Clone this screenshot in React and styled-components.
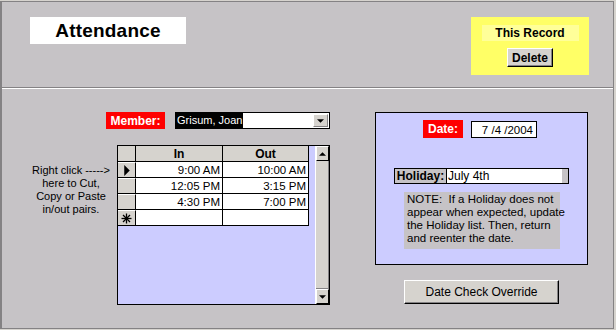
import styled, { createGlobalStyle } from "styled-components";

const Global = createGlobalStyle`
  html, body {
    margin: 0;
    padding: 0;
    background: #d6d3ce;
  }
  body {
    font-family: "Liberation Sans", Arial, sans-serif;
    font-size: 11px;
    color: #000;
  }
`;

const Window = styled.div`
  margin-top: 1px;
  width: 611px;
  height: 326px;
  background: #c6c3c6;
  border-top: 1px solid #848284;
  border-left: 2px solid #848284;
  border-right: 1px solid #848284;
  border-bottom: 1px solid #848284;
  display: flex;
  flex-direction: column;
`;

const Header = styled.div`
  height: 86px;
  display: flex;
  justify-content: space-between;
  align-items: flex-start;
  padding: 15px 24px 0 28px;
  box-sizing: border-box;
  border-bottom: 1px solid #848284;
`;

const Divider = styled.div`
  height: 1px;
  background: #ffffff;
`;

const TitleBox = styled.div`
  width: 156px;
  height: 27px;
  background: #fff;
  display: flex;
  align-items: center;
  justify-content: center;
  font-size: 19px;
  font-weight: bold;
  letter-spacing: 0.2px;
`;

const RecordBox = styled.div`
  width: 118px;
  height: 58px;
  background: #ffff66;
  display: flex;
  flex-direction: column;
  align-items: center;
  padding-top: 8px;
  box-sizing: border-box;
  gap: 7px;
`;

const RecordTitle = styled.div`
  width: 97px;
  height: 16px;
  background: #ffff99;
  display: flex;
  align-items: center;
  justify-content: center;
  font-weight: bold;
  font-size: 12px;
`;

const Button = styled.button`
  width: ${(p) => p.$w}px;
  height: ${(p) => p.$h}px;
  background: #d6d3ce;
  font-family: "Liberation Sans", Arial, sans-serif;
  font-size: 12px;
  font-weight: ${(p) => (p.$bold ? "bold" : "normal")};
  color: #000;
  padding: 0;
  border: 1px solid;
  border-color: #fff #000 #000 #fff;
  box-shadow: inset -1px -1px 0 #848284;
  cursor: default;
`;

const Body = styled.div`
  flex: 1;
  display: flex;
  padding-top: 23px;
`;

const LeftCol = styled.div`
  width: 328px;
  display: flex;
  flex-direction: column;
`;

const MemberRow = styled.div`
  display: flex;
  gap: 10px;
  margin-left: 104px;
`;

const RedLabel = styled.div`
  width: ${(p) => p.$w}px;
  height: ${(p) => p.$h}px;
  background: #ff0000;
  color: #fff;
  font-weight: bold;
  font-size: 12px;
  display: flex;
  align-items: center;
  justify-content: center;
`;

const Combo = styled.div`
  width: 155px;
  height: 17px;
  box-sizing: border-box;
  background: #fff;
  border: 1px solid #000;
  display: flex;
  align-items: center;
  justify-content: space-between;
`;

const ComboText = styled.span`
  background: #000;
  color: #fff;
  font-size: 11px;
  line-height: 15px;
  padding: 0 1px;
`;

const DropButton = styled.div`
  width: 15px;
  height: 13px;
  margin-right: 1px;
  background: #d6d3ce;
  border: 1px solid;
  border-color: #fff #848284 #848284 #fff;
  box-sizing: border-box;
  display: flex;
  align-items: center;
  justify-content: center;
`;

const GridRow = styled.div`
  display: flex;
  margin-top: 16px;
`;

const HelpText = styled.div`
  width: 84px;
  margin-left: 27px;
  margin-right: 4px;
  padding-top: 19px;
  text-align: center;
  font-size: 11px;
  line-height: 13px;
`;

const Grid = styled.div`
  width: 213px;
  height: 160px;
  box-sizing: border-box;
  border: 1px solid #000;
  background: #ccccff;
  display: flex;
`;

const Sheet = styled.div`
  flex: 1;
  display: flex;
  flex-direction: column;
`;

const Row = styled.div`
  display: grid;
  grid-template-columns: 18px 87px 86px;
  height: 16px;
  border-bottom: 1px solid #000;
  box-sizing: border-box;
`;

const HeadCell = styled.div`
  background: #d6d3ce;
  border-right: 1px solid #000;
  font-weight: bold;
  font-size: 12px;
  display: flex;
  align-items: center;
  justify-content: center;
`;

const Selector = styled.div`
  background: #d6d3ce;
  border-right: 1px solid #000;
  border-top: 1px solid #fff;
  display: flex;
  align-items: center;
  justify-content: center;
`;

const Cell = styled.div`
  background: #fff;
  border-right: 1px solid #000;
  font-size: 11.5px;
  display: flex;
  align-items: center;
  justify-content: flex-end;
  padding-right: 2px;
`;

const Scroll = styled.div`
  width: 15px;
  margin-left: 6px;
  display: flex;
  flex-direction: column;
  background: #d6d3ce;
  border-left: 1px solid #fff;
`;

const Track = styled.div`
  flex: 1;
  border-bottom: 1px solid #848284;
  box-shadow: inset -1px 0 0 #848284;
`;

const ArrowBtn = styled.div`
  height: 15px;
  box-sizing: border-box;
  background: #d6d3ce;
  border: 1px solid;
  border-color: #fff #000 #000 #fff;
  display: flex;
  align-items: center;
  justify-content: center;
`;

const RightCol = styled.div`
  margin-left: 45px;
  display: flex;
  flex-direction: column;
`;

const DatePanel = styled.div`
  width: 213px;
  height: 153px;
  box-sizing: border-box;
  border: 1px solid #000;
  background: #ccccff;
  display: flex;
  flex-direction: column;
`;

const DateRow = styled.div`
  display: flex;
  align-items: flex-start;
  gap: 8px;
  margin: 7px 0 0 47px;
`;

const DateInput = styled.div`
  width: 66px;
  height: 17px;
  margin-top: 1px;
  box-sizing: border-box;
  background: #fff;
  border: 1px solid #000;
  font-size: 11.5px;
  display: flex;
  align-items: center;
  justify-content: flex-end;
  padding-right: 3px;
`;

const HolidayRow = styled.div`
  width: 175px;
  height: 16px;
  box-sizing: border-box;
  margin: 30px 0 0 18px;
  border: 1px solid #000;
  display: flex;
  background: #fff;
`;

const HolidayLabel = styled.div`
  width: 51px;
  background: #c6c3c6;
  border-right: 1px solid #000;
  font-weight: bold;
  font-size: 12px;
  display: flex;
  align-items: center;
  justify-content: center;
`;

const HolidayValue = styled.div`
  flex: 1;
  font-size: 12px;
  padding-left: 1px;
  display: flex;
  align-items: center;
`;

const HolidayEdge = styled.div`
  width: 6px;
  background: #c6c3c6;
  border-left: 1px solid #fff;
`;

const Note = styled.div`
  width: 156px;
  height: 57px;
  margin: 8px 0 0 28px;
  background: #c6c3c6;
  font-size: 11.5px;
  line-height: 13px;
  padding: 1px 0 0 3px;
  box-sizing: border-box;
  white-space: nowrap;
`;

const ButtonRow = styled.div`
  margin: 15px 0 0 29px;
`;

const Tri = ({ dir, size = 4 }) => {
  const s = size;
  const pts = {
    right: `0,0 ${s},${s} 0,${s * 2}`,
    down: `0,0 ${s * 2},0 ${s},${s}`,
    up: `0,${s} ${s * 2},${s} ${s},0`,
  }[dir];
  const w = dir === "right" ? s : s * 2;
  const h = dir === "right" ? s * 2 : s;
  return (
    <svg width={w + 1} height={h + 1} viewBox={`0 0 ${w} ${h}`}>
      <polygon points={pts} fill="#000" />
    </svg>
  );
};

const Star = () => (
  <svg width="11" height="11" viewBox="0 0 11 11">
    <g stroke="#000" strokeWidth="1.3">
      <line x1="5.5" y1="0.5" x2="5.5" y2="10.5" />
      <line x1="0.5" y1="5.5" x2="10.5" y2="5.5" />
      <line x1="2" y1="2" x2="9" y2="9" />
      <line x1="9" y1="2" x2="2" y2="9" />
    </g>
  </svg>
);

const rows = [
  ["9:00 AM", "10:00 AM"],
  ["12:05 PM", "3:15 PM"],
  ["4:30 PM", "7:00 PM"],
];

export default function App() {
  return (
    <>
      <Global />
      <Window>
        <Header>
          <TitleBox>Attendance</TitleBox>
          <RecordBox>
            <RecordTitle>This Record</RecordTitle>
            <Button $w={46} $h={19} $bold>
              Delete
            </Button>
          </RecordBox>
        </Header>
        <Divider />
        <Body>
          <LeftCol>
            <MemberRow>
              <RedLabel $w={59} $h={17}>Member:</RedLabel>
              <Combo>
                <ComboText>Grisum, Joan</ComboText>
                <DropButton>
                  <Tri dir="down" size={3} />
                </DropButton>
              </Combo>
            </MemberRow>
            <GridRow>
              <HelpText>
                Right click -----&gt;
                <br />
                here to Cut,
                <br />
                Copy or Paste
                <br />
                in/out pairs.
              </HelpText>
              <Grid>
                <Sheet>
                  <Row>
                    <HeadCell />
                    <HeadCell>In</HeadCell>
                    <HeadCell>Out</HeadCell>
                  </Row>
                  {rows.map((r, i) => (
                    <Row key={i}>
                      <Selector>{i === 0 && <Tri dir="right" size={5} />}</Selector>
                      <Cell>{r[0]}</Cell>
                      <Cell>{r[1]}</Cell>
                    </Row>
                  ))}
                  <Row>
                    <Selector>
                      <Star />
                    </Selector>
                    <Cell />
                    <Cell />
                  </Row>
                </Sheet>
                <Scroll>
                  <ArrowBtn>
                    <Tri dir="up" size={3} />
                  </ArrowBtn>
                  <Track />
                  <ArrowBtn>
                    <Tri dir="down" size={3} />
                  </ArrowBtn>
                </Scroll>
              </Grid>
            </GridRow>
          </LeftCol>
          <RightCol>
            <DatePanel>
              <DateRow>
                <RedLabel $w={40} $h={18}>Date:</RedLabel>
                <DateInput>7 /4 /2004</DateInput>
              </DateRow>
              <HolidayRow>
                <HolidayLabel>Holiday:</HolidayLabel>
                <HolidayValue>July 4th</HolidayValue>
                <HolidayEdge />
              </HolidayRow>
              <Note>
                NOTE:&nbsp; If a Holiday does not
                <br />
                appear when expected, update
                <br />
                the Holiday list. Then, return
                <br />
                and reenter the date.
              </Note>
            </DatePanel>
            <ButtonRow>
              <Button $w={155} $h={24}>
                Date Check Override
              </Button>
            </ButtonRow>
          </RightCol>
        </Body>
      </Window>
    </>
  );
}
